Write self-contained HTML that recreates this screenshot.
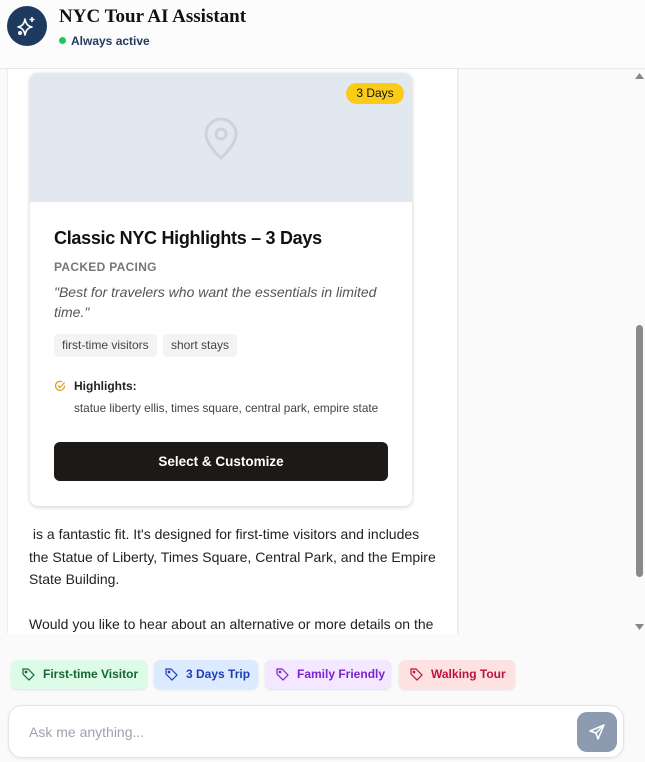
<!DOCTYPE html>
<html><head><meta charset="utf-8"><style>
*{box-sizing:border-box;margin:0;padding:0}
body{width:645px;height:762px;overflow:hidden;background:#fafafa;font-family:"Liberation Sans",sans-serif;position:relative}
.hdr{position:absolute;left:0;top:0;width:645px;height:69px;background:#fcfcfc;border-bottom:1px solid #e8e8ea}
.av{position:absolute;left:7px;top:6px;width:40px;height:40px;border-radius:50%;background:#1e3a5f}
.ttl{position:absolute;left:59px;top:6px;font-family:"Liberation Serif",serif;font-weight:bold;font-size:19px;color:#111}
.st{position:absolute;left:59px;top:34px;font-size:12px;color:#1e3a5f;font-weight:bold}
.st i{display:inline-block;width:7px;height:7px;border-radius:50%;background:#22c55e;margin-right:5px;vertical-align:1px}
.col{position:absolute;left:7px;top:69px;width:452px;height:565px;background:#fff;border-left:1px solid #eee;border-right:2px solid #eee;overflow:hidden}
.card{position:absolute;left:22px;top:4px;width:382px;height:433px;background:#fff;border-radius:8px;box-shadow:0 1px 4px rgba(0,0,0,.2);overflow:hidden}
.img{height:129px;background:#e2e8f0;position:relative}
.badge{position:absolute;left:316px;top:10px;width:58px;height:21px;border-radius:11px;background:#facc15;font-size:12px;text-align:center;line-height:21px;color:#111}
.h{position:absolute;left:24px;top:155px;font-size:18px;font-weight:bold;color:#111;letter-spacing:-.3px}
.pp{position:absolute;left:24px;top:187px;font-size:12px;color:#777;font-weight:bold;letter-spacing:.3px}
.q{position:absolute;left:24px;top:209px;width:330px;font-size:14px;font-style:italic;color:#555;line-height:20px}
.tg{position:absolute;top:261px;height:23px;background:#f3f3f3;border-radius:4px;font-size:12px;color:#444;line-height:23px;padding:0 8px}
.hl{position:absolute;left:44px;top:306px;font-size:12px;font-weight:bold;color:#222}
.hs{position:absolute;left:44px;top:328px;font-size:11.8px;color:#444}
.btn{position:absolute;left:24px;top:369px;width:334px;height:39px;background:#1c1917;border-radius:6px;color:#fff;font-weight:bold;font-size:13.5px;text-align:center;line-height:39px}
.txt{position:absolute;left:21px;top:454px;width:412px;font-size:14px;line-height:22.5px;color:#222}
.sb{position:absolute;left:636px;top:325px;width:7px;height:252px;background:#8a8a8a;border-radius:4px}
.chip{position:absolute;top:660px;height:29px;border-radius:6px;font-size:12px;font-weight:bold;line-height:29px;padding-left:32px;box-shadow:0 1px 2px rgba(0,0,0,.1)}
.chip svg{position:absolute;left:11px;top:8px}
.inp{position:absolute;left:8px;top:705px;width:616px;height:53px;background:#fff;border:1px solid #e3e3e8;border-radius:14px;box-shadow:0 1px 3px rgba(0,0,0,.08)}
.ph{position:absolute;left:20px;top:18px;font-size:14px;color:#9ca3af}
.send{position:absolute;left:568px;top:6px;width:40px;height:40px;border-radius:10px;background:#8d9bb0}
</style></head><body>
<div class="hdr">
<div class="av"><svg width="40" height="40" viewBox="0 0 40 40" fill="none" stroke="#fff" stroke-width="1.6" stroke-linejoin="round"><path d="M18 13 Q19 20 25 21 Q19 22 18 29 Q17 22 11 21 Q17 20 18 13Z"/><path d="M25 11v5M22.5 13.5h5"/><circle cx="13" cy="27" r="1.2"/></svg></div>
<div class="ttl">NYC Tour AI Assistant</div>
<div class="st"><i></i>Always active</div>
</div>
<div class="col">
<div class="card">
<div class="img"><span class="badge">3 Days</span>
<svg style="position:absolute;left:172px;top:44px" width="38" height="44" viewBox="0 0 38 44" fill="none" stroke="#cdd3db" stroke-width="3"><path d="M19 41C19 41 34 28 34 17A15 15 0 0 0 4 17C4 28 19 41 19 41Z"/><circle cx="19" cy="17" r="5"/></svg></div>
<div class="h">Classic NYC Highlights – 3 Days</div>
<div class="pp">PACKED PACING</div>
<div class="q">"Best for travelers who want the essentials in limited time."</div>
<div class="tg" style="left:24px">first-time visitors</div>
<div class="tg" style="left:133px">short stays</div>
<svg style="position:absolute;left:24px;top:307px" width="12" height="12" viewBox="0 0 12 12" fill="none" stroke="#e0a030" stroke-width="1.3"><path d="M10.5 5.5A4.5 4.5 0 1 1 8 1.8"/><path d="M4 5.5l2 2 4.5-5"/></svg>
<div class="hl">Highlights:</div>
<div class="hs">statue liberty ellis, times square, central park, empire state</div>
<div class="btn">Select &amp; Customize</div>
</div>
<div class="txt">&nbsp;is a fantastic fit. It's designed for first-time visitors and includes the Statue of Liberty, Times Square, Central Park, and the Empire State Building.<br><br>Would you like to hear about an alternative or more details on the</div>
</div>
<svg style="position:absolute;left:635px;top:72px" width="9" height="7"><path d="M0 7L4.5 1 9 7Z" fill="#888"/></svg>
<svg style="position:absolute;left:635px;top:624px" width="9" height="7"><path d="M0 0L4.5 6 9 0Z" fill="#888"/></svg>
<div class="sb"></div>
<div class="chip" style="left:11px;width:136px;background:#dcfce7;color:#166534"><svg width="13" height="13" viewBox="0 0 13 13" fill="none" stroke="currentColor" stroke-width="1.2"><path d="M1 1h5l6 6-5 5-6-6z"/><circle cx="4" cy="4" r=".8"/></svg>First-time Visitor</div>
<div class="chip" style="left:154px;width:104px;background:#dbeafe;color:#1e40af"><svg width="13" height="13" viewBox="0 0 13 13" fill="none" stroke="currentColor" stroke-width="1.2"><path d="M1 1h5l6 6-5 5-6-6z"/><circle cx="4" cy="4" r=".8"/></svg>3 Days Trip</div>
<div class="chip" style="left:265px;width:126px;background:#f3e8ff;color:#7e22ce"><svg width="13" height="13" viewBox="0 0 13 13" fill="none" stroke="currentColor" stroke-width="1.2"><path d="M1 1h5l6 6-5 5-6-6z"/><circle cx="4" cy="4" r=".8"/></svg>Family Friendly</div>
<div class="chip" style="left:399px;width:116px;background:#fee2e2;color:#be123c"><svg width="13" height="13" viewBox="0 0 13 13" fill="none" stroke="currentColor" stroke-width="1.2"><path d="M1 1h5l6 6-5 5-6-6z"/><circle cx="4" cy="4" r=".8"/></svg>Walking Tour</div>
<div class="inp"><span class="ph">Ask me anything...</span>
<div class="send"><svg width="40" height="40" viewBox="0 0 40 40" fill="none" stroke="#fff" stroke-width="1.5" stroke-linejoin="round"><path d="M27 13L13 19l6 2 2 6z"/><path d="M19 21l8-8"/></svg></div></div>
</body></html>
